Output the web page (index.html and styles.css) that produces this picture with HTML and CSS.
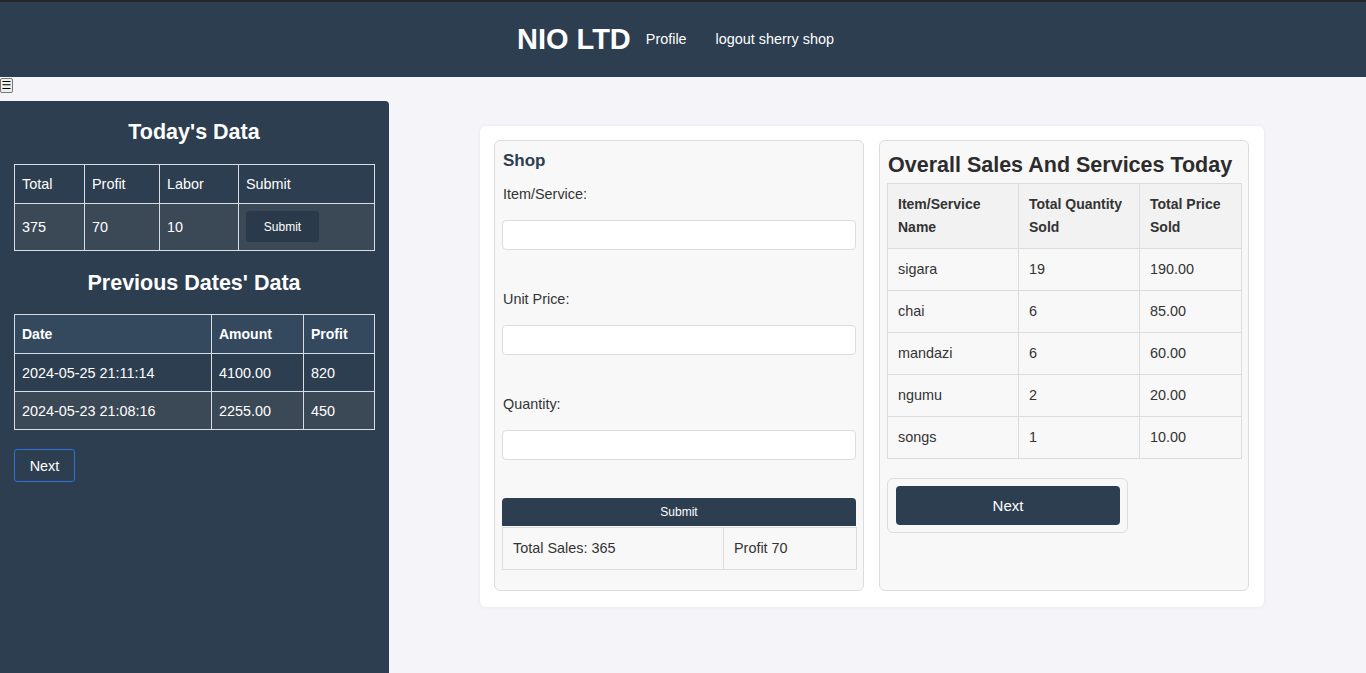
FILE: index.html
```html
<!DOCTYPE html>
<html lang="en">
<head>
<meta charset="utf-8">
<title>NIO LTD</title>
<link rel="stylesheet" href="styles.css">
</head>
<body>
<header class="topbar">
  <h1 class="brand">NIO LTD</h1>
  <nav class="nav">
    <a href="#" class="nav-link">Profile</a>
    <a href="#" class="nav-link">logout sherry shop</a>
  </nav>
</header>
<button class="menu-toggle" type="button">☰</button>
<div class="layout">
  <aside class="sidebar">
    <h2 class="side-title">Today's Data</h2>
    <table class="side-table today">
      <thead>
        <tr><th class="c1">Total</th><th class="c2">Profit</th><th class="c3">Labor</th><th class="c4">Submit</th></tr>
      </thead>
      <tbody>
        <tr><td>375</td><td>70</td><td>10</td><td><button class="small-btn" type="button">Submit</button></td></tr>
      </tbody>
    </table>
    <h2 class="side-title second">Previous Dates' Data</h2>
    <table class="side-table prev">
      <thead>
        <tr><th class="d1">Date</th><th class="d2">Amount</th><th class="d3">Profit</th></tr>
      </thead>
      <tbody>
        <tr class="row-a"><td>2024-05-25 21:11:14</td><td>4100.00</td><td>820</td></tr>
        <tr class="row-b"><td>2024-05-23 21:08:16</td><td>2255.00</td><td>450</td></tr>
      </tbody>
    </table>
    <button class="outline-btn" type="button">Next</button>
  </aside>
  <main class="main">
    <section class="card">
      <div class="panel shop">
        <h3 class="shop-title">Shop</h3>
        <label class="field-label">Item/Service:</label>
        <input class="field-input" type="text">
        <label class="field-label">Unit Price:</label>
        <input class="field-input" type="text">
        <label class="field-label">Quantity:</label>
        <input class="field-input" type="text">
        <button class="submit-btn" type="button">Submit</button>
        <table class="totals">
          <tr><td class="t1">Total Sales: 365</td><td class="t2">Profit 70</td></tr>
        </table>
      </div>
      <div class="panel overview">
        <h2 class="overview-title">Overall Sales And Services Today</h2>
        <table class="sales">
          <thead>
            <tr><th class="s1">Item/Service Name</th><th class="s2">Total Quantity Sold</th><th class="s3">Total Price Sold</th></tr>
          </thead>
          <tbody>
            <tr><td>sigara</td><td>19</td><td>190.00</td></tr>
            <tr><td>chai</td><td>6</td><td>85.00</td></tr>
            <tr><td>mandazi</td><td>6</td><td>60.00</td></tr>
            <tr><td>ngumu</td><td>2</td><td>20.00</td></tr>
            <tr><td>songs</td><td>1</td><td>10.00</td></tr>
          </tbody>
        </table>
        <div class="next-box">
          <button class="next-btn" type="button">Next</button>
        </div>
      </div>
    </section>
  </main>
</div>
</body>
</html>
```

FILE: styles.css
```css
* { box-sizing: border-box; }

html, body {
  margin: 0;
  padding: 0;
}

body {
  background: #f4f4f9;
  font-family: "Liberation Sans", Arial, sans-serif;
  color: #333;
  overflow: hidden;
}

.topbar {
  height: 77px;
  background: #2c3e50;
  border-top: 2px solid #23272c;
  display: flex;
  align-items: center;
  justify-content: center;
  padding-right: 15px;
  padding-bottom: 1px;
}

.brand {
  margin: 0 15px 0 0;
  font-size: 29px;
  font-weight: bold;
  color: #fff;
  line-height: 32px;
}

.nav {
  display: flex;
  gap: 29px;
  padding-top: 0;
}

.nav-link {
  color: #fff;
  text-decoration: none;
  font-size: 14.4px;
}

.menu-toggle {
  display: block;
  margin: 1px 0 8px 0;
  width: 13px;
  height: 15px;
  padding: 0;
  font-size: 11px;
  line-height: 13px;
  border: 1px solid #767676;
  border-radius: 2px;
  background: #efefef;
  color: #000;
  font-family: "DejaVu Sans", sans-serif;
  overflow: hidden;
}

.layout {
  display: flex;
  align-items: flex-start;
}

.sidebar {
  width: 389px;
  flex: 0 0 389px;
  min-height: 572px;
  background: #2c3e50;
  color: #fff;
  padding: 0 15px 20px 14px;
  border-radius: 0 4px 0 0;
}

.side-title {
  margin: 17px 0 18px;
  font-size: 21.5px;
  line-height: 28px;
  text-align: center;
  font-weight: bold;
}

.side-title.second {
  margin: 18px 0 17px;
}

.side-table {
  width: 360px;
  border-collapse: collapse;
  font-size: 14.4px;
  table-layout: fixed;
}

.side-table th,
.side-table td {
  border: 1px solid #d6dde6;
  text-align: left;
  padding: 0 7px;
  line-height: 16px;
}

.today th {
  font-weight: normal;
  height: 39px;
  background: #2c3e50;
}

.today td {
  height: 47px;
  background: #3b4856;
  padding-bottom: 1px;
}

.today .c1 { width: 70px; }
.today .c2 { width: 75px; }
.today .c3 { width: 79px; }
.today .c4 { width: 136px; }

.small-btn {
  width: 73px;
  height: 31px;
  background: #2b3a4a;
  color: #fff;
  border: none;
  border-radius: 3px;
  font-family: "Liberation Sans", Arial, sans-serif;
  font-size: 12px;
  padding: 0;
  display: block;
}

.prev th {
  height: 39px;
  font-weight: bold;
  font-size: 14px;
  background: #34495e;
}

.prev td {
  height: 38px;
}

.prev .row-a td { background: #2c3e50; }
.prev .row-b td { background: #3b4856; }

.prev .d1 { width: 197px; }
.prev .d2 { width: 92px; }
.prev .d3 { width: 71px; }

.outline-btn {
  display: block;
  margin-top: 19px;
  width: 61px;
  height: 33px;
  background: transparent;
  border: 1px solid #2b73d6;
  border-radius: 3px;
  color: #fff;
  font-family: "Liberation Sans", Arial, sans-serif;
  font-size: 14.4px;
  font-weight: 500;
  padding: 0;
}

.main {
  flex: 1;
  padding: 25px 0 0 91px;
}

.card {
  width: 784px;
  background: #fff;
  border-radius: 6px;
  box-shadow: 0 0 4px rgba(0, 0, 0, 0.06);
  padding: 14px 15px 16px 14px;
  display: flex;
  gap: 15px;
}

.panel {
  width: 370px;
  height: 451px;
  background: #f8f8f8;
  border: 1px solid #dcdcdc;
  border-radius: 6px;
}

.shop {
  padding: 8px 7px 8px 7px;
}

.shop-title {
  margin: 2px 0 13px 1px;
  font-size: 17px;
  line-height: 20px;
  font-weight: bold;
  color: #2c3e50;
}

.field-label {
  display: block;
  font-size: 14.4px;
  line-height: 20px;
  color: #333;
  margin-left: 1px;
}

.field-input {
  display: block;
  width: 354px;
  height: 30px;
  margin: 16px 0 39px;
  border: 1px solid #dcdcdc;
  border-radius: 4px;
  background: #fff;
}

.field-input:last-of-type {
  margin-bottom: 38px;
}

.submit-btn {
  display: block;
  width: 354px;
  height: 28px;
  background: #2c3e50;
  color: #fff;
  border: none;
  border-radius: 4px 4px 0 0;
  font-family: "Liberation Sans", Arial, sans-serif;
  font-size: 12px;
  padding: 0;
}

.totals {
  width: 354px;
  border-collapse: collapse;
  margin-top: 1px;
  table-layout: fixed;
}

.totals td {
  border: 1px solid #dcdcdc;
  font-size: 14.4px;
  line-height: 20px;
  padding: 0 10px 1px;
  height: 42px;
  color: #333;
}

.totals .t1 { width: 221px; }
.totals .t2 { width: 133px; }

.overview {
  padding: 8px 7px 8px 7px;
}

.overview-title {
  margin: 2px 0 4px 1px;
  font-size: 21.5px;
  line-height: 28px;
  font-weight: bold;
  color: #2c2c2c;
  white-space: nowrap;
}

.sales {
  width: 354px;
  border-collapse: collapse;
  table-layout: fixed;
  font-size: 14.4px;
}

.sales th,
.sales td {
  border: 1px solid #dcdcdc;
  text-align: left;
  padding: 0 10px;
}

.sales th {
  height: 65px;
  font-size: 14px;
  line-height: 23px;
  background: #f2f2f2;
  font-weight: bold;
  color: #333;
}

.sales td {
  height: 42px;
  line-height: 20px;
  color: #333;
  padding-bottom: 1px;
}

.sales .s1 { width: 131px; }
.sales .s2 { width: 121px; }
.sales .s3 { width: 102px; }

.next-box {
  margin-top: 19px;
  width: 241px;
  height: 55px;
  border: 1px solid #dcdcdc;
  border-radius: 6px;
  background: #f8f8f8;
  padding: 7px 7px 7px 8px;
}

.next-btn {
  display: block;
  width: 224px;
  height: 39px;
  background: #2c3e50;
  color: #fff;
  border: none;
  border-radius: 4px;
  font-family: "Liberation Sans", Arial, sans-serif;
  font-size: 15px;
  padding: 0 0 1px;
}
```
